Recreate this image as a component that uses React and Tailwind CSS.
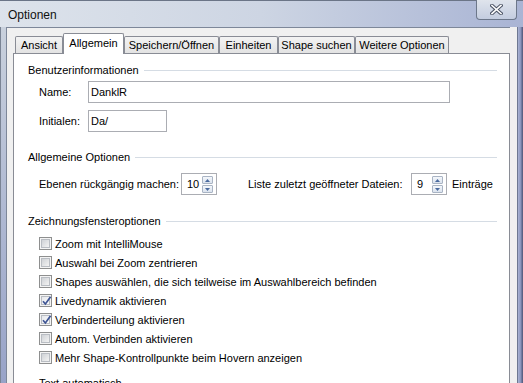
import React from "react";

function Header({ children }) {
  return (
    <div className="flex items-center h-[14px] pl-[14px] pr-[12px]">
      <span className="whitespace-nowrap">{children}</span>
      <div className="flex-1 ml-[5px] h-px bg-[#d5dce4]" />
    </div>
  );
}

function Check({ checked, label }) {
  return (
    <div className="flex items-center h-[19px] pl-[25px]">
      <div className="relative w-[13px] h-[13px] border border-[#8e8f8f] bg-[#f4f4f4] p-px">
        <div
          className={
            "w-full h-full border border-[#b9bdc3] " +
            (checked
              ? "bg-gradient-to-br from-[#e6e8ec] to-[#fbfbfb]"
              : "bg-gradient-to-br from-[#cfd2d6] to-[#f3f3f3]")
          }
        />
        {checked && (
          <svg className="absolute left-[1px] top-[0px]" width="12" height="12" viewBox="0 0 12 12">
            <path d="M2 6.2 L4.4 9 L9.6 1.8" fill="none" stroke="#3e5594" strokeWidth="1.7" />
          </svg>
        )}
      </div>
      <span className="ml-[3px] whitespace-nowrap">{label}</span>
    </div>
  );
}

function SpinBtn({ up }) {
  return (
    <div className="w-[11px] h-[8px] border border-[#a9b4c4] bg-gradient-to-b from-[#f4f7fb] to-[#dbe3ee] flex items-center justify-center rounded-[1px]">
      <svg width="5" height="3" viewBox="0 0 5 3">
        {up ? <path d="M0 3 L2.5 0 L5 3 Z" fill="#4a6a9e" /> : <path d="M0 0 L2.5 3 L5 0 Z" fill="#4a6a9e" />}
      </svg>
    </div>
  );
}

function Spin({ value }) {
  return (
    <div className="w-[36px] h-[22px] border border-[#abadb3] bg-white flex items-start">
      <span className="pl-[5px] pt-[3px] flex-1">{value}</span>
      <div className="flex flex-col pt-[2px] pr-[3px] gap-px">
        <SpinBtn up />
        <SpinBtn />
      </div>
    </div>
  );
}

function Tab({ w, label, active }) {
  if (active) {
    return (
      <div
        className={"relative z-10 h-[21px] -mb-px bg-white border border-b-0 border-[#898c95] flex justify-center pt-[2px] rounded-t-[2px] " + w}
      >
        {label}
      </div>
    );
  }
  return (
    <div
      className={"h-[17px] bg-gradient-to-b from-[#f3f3f3] to-[#e3e3e3] border border-b-0 border-[#898c95] flex items-center justify-center rounded-t-[2px] " + w}
    >
      {label}
    </div>
  );
}

export default function App() {
  return (
    <div className="w-[523px] h-[383px] overflow-hidden flex flex-col font-['Liberation_Sans',Arial,sans-serif] text-[11px] leading-[14px] text-black bg-[#aab4d2]">
      {/* Title bar */}
      <div className="h-[27px] flex items-start border-t border-[#6b7587] bg-gradient-to-r from-[#dde3eb] via-[#cdd5e3] to-[#a9b4d4] shrink-0">
        <div className="pl-[8px] pt-[7px] text-[12px] leading-[14px] text-[#111]">Optionen</div>
        <div className="ml-auto mr-[6px] w-[41px] h-[20px] -mt-px border border-t-0 border-[#6c778a] rounded-b-[4px] bg-gradient-to-b from-[#dfe4ec] to-[#c4cde0] flex items-center justify-center">
          <svg width="13" height="11" viewBox="0 0 13 11">
            <path d="M2 1.5 L11 9.5 M11 1.5 L2 9.5" stroke="#4b5365" strokeWidth="3.6" strokeLinecap="square" />
            <path d="M2 1.5 L11 9.5 M11 1.5 L2 9.5" stroke="#ffffff" strokeWidth="1.6" strokeLinecap="square" />
          </svg>
        </div>
      </div>

      <div className="flex-1 flex min-h-0">
        {/* left frame */}
        <div className="w-[6px] border-l border-[#7a8494] bg-gradient-to-b from-[#c9d1dd] to-[#98a3c8]" />
        {/* client */}
        <div className="flex-1 flex flex-col bg-[#f0f0f0] border-l border-t border-[#7d8799] pt-[5px] min-w-0">
          <div className="flex items-end h-[20px] pl-[8px]">
            <Tab w="w-[48px]" label="Ansicht" />
            <Tab w="w-[61px]" label="Allgemein" active />
            <Tab w="w-[95px]" label="Speichern/Öffnen" />
            <Tab w="w-[59px]" label="Einheiten" />
            <Tab w="w-[77px]" label="Shape suchen" />
            <Tab w="w-[94px]" label="Weitere Optionen" />
          </div>
          <div className="ml-[6px] w-[497px] flex-1 bg-white border border-b-0 border-[#898c95] flex flex-col">
            <div className="mt-[9px]">
              <Header>Benutzerinformationen</Header>
            </div>
            <div className="mt-[4px] flex items-center h-[22px] pl-[25px]">
              <span className="w-[49px]">Name:</span>
              <div className="w-[362px] h-[22px] border border-[#abadb3] pl-[2px] flex items-center">DanklR</div>
            </div>
            <div className="mt-[7px] flex items-center h-[22px] pl-[25px]">
              <span className="w-[49px]">Initialen:</span>
              <div className="w-[79px] h-[22px] border border-[#abadb3] pl-[2px] flex items-center">Da/</div>
            </div>
            <div className="mt-[18px]">
              <Header>Allgemeine Optionen</Header>
            </div>
            <div className="mt-[9px] flex items-center h-[22px] pl-[25px]">
              <span className="w-[142px] whitespace-nowrap">Ebenen rückgängig machen:</span>
              <Spin value="10" />
              <span className="ml-[31px] w-[163px] whitespace-nowrap">Liste zuletzt geöffneter Dateien:</span>
              <Spin value="9" />
              <span className="ml-[5px]">Einträge</span>
            </div>
            <div className="mt-[19px]">
              <Header>Zeichnungsfensteroptionen</Header>
            </div>
            <div className="mt-[6px] flex flex-col">
              <Check label="Zoom mit IntelliMouse" />
              <Check label="Auswahl bei Zoom zentrieren" />
              <Check label="Shapes auswählen, die sich teilweise im Auswahlbereich befinden" />
              <Check checked label="Livedynamik aktivieren" />
              <Check checked label="Verbinderteilung aktivieren" />
              <Check label="Autom. Verbinden aktivieren" />
              <Check label="Mehr Shape-Kontrollpunkte beim Hovern anzeigen" />
            </div>
            <div className="mt-[9px] pl-[25px] whitespace-nowrap">Text automatisch</div>
          </div>
        </div>
        <div className="w-[7px] bg-[#f0f0f0]" />
        {/* right frame */}
        <div className="w-[6px] border-l border-[#6e7891] bg-gradient-to-r from-[#aab4d4] via-[#8d97bf] to-[#4e5577]" />
      </div>
    </div>
  );
}
